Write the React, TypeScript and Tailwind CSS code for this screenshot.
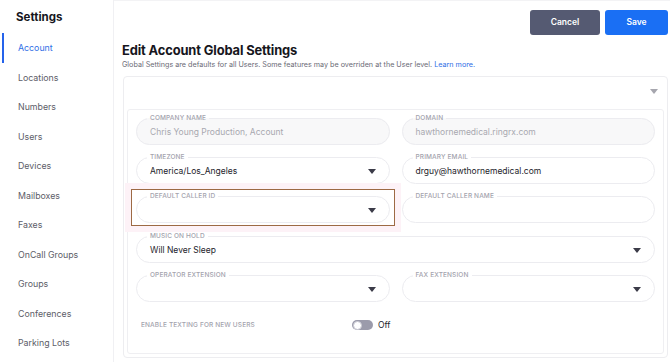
import React from "react";

const nav = [
  "Account",
  "Locations",
  "Numbers",
  "Users",
  "Devices",
  "Mailboxes",
  "Faxes",
  "OnCall Groups",
  "Groups",
  "Conferences",
  "Parking Lots",
];

function Caret({ className = "" }: { className?: string }) {
  return (
    <svg width="8" height="5" viewBox="0 0 8 5" className={className}>
      <path d="M0 0h8L4 5z" fill="currentColor" />
    </svg>
  );
}

function Field({
  label,
  value,
  disabled,
  select,
  className = "",
}: {
  label: string;
  value?: string;
  disabled?: boolean;
  select?: boolean;
  className?: string;
}) {
  return (
    <fieldset
      className={
        "rounded-full border border-[#ececf0] px-[10px] pb-[2px] " +
        (disabled ? "bg-[#f8f8f9] " : "bg-white ") +
        className
      }
    >
      <legend className="px-[3px] text-[6.5px] font-medium leading-[9px] tracking-[0.02em] text-[#a3a3ad] uppercase">
        {label}
      </legend>
      <div className="flex h-[19px] items-center justify-between pl-[3px] pr-[3px]">
        <span
          className={
            "text-[8.5px] " + (disabled ? "text-[#a8a8b0]" : "text-[#23232b]")
          }
        >
          {value}
        </span>
        {select && <Caret className="text-[#3b3b48]" />}
      </div>
    </fieldset>
  );
}

export default function App() {
  return (
    <div
      className="flex h-[362px] w-[670px] overflow-hidden bg-white"
      style={{ fontFamily: "Inter, 'Noto Sans', sans-serif" }}
    >
      {/* Sidebar */}
      <aside className="w-[114px] shrink-0 border-r border-[#f0f0f3]">
        <div className="pl-[16px] pt-[9px] text-[11.5px] font-bold text-[#16161d]">
          Settings
        </div>
        <nav className="mt-[7px]">
          {nav.map((item, i) => (
            <div
              key={item}
              className={
                "flex h-[29.5px] items-center border-l-[2px] pl-[14px] text-[8.8px] " +
                (i === 0
                  ? "ml-[2px] border-[#2563eb] text-[#2f6ee6]"
                  : "ml-[2px] border-transparent text-[#5d5d68]")
              }
            >
              {item}
            </div>
          ))}
        </nav>
      </aside>

      {/* Main */}
      <main className="flex-1 border-t border-[#f3f3f5] pl-[8px] pr-[2px]">
        <div className="flex justify-end gap-[5px] pt-[9px]">
          <button className="h-[25px] w-[70px] rounded-[3px] bg-[#555a72] text-[8.5px] font-semibold text-white">
            Cancel
          </button>
          <button className="h-[25px] w-[63px] rounded-[3px] bg-[#1a6ff4] text-[8.5px] font-semibold text-white">
            Save
          </button>
        </div>

        <h1 className="mt-[8px] text-[12.9px] leading-[16px] font-bold tracking-[-0.01em] text-[#16161d]">
          Edit Account Global Settings
        </h1>
        <p className="mt-[1px] text-[7.2px] text-[#6a6a75]">
          Global Settings are defaults for all Users. Some features may be
          overriden at the User level.{" "}
          <span className="text-[#2f6ee6]">Learn more.</span>
        </p>

        <section className="mt-[5px] ml-[1px] rounded-[4px] border border-[#ededf0] p-[3px] pt-0">
          <div className="flex h-[32px] items-center justify-end pr-[6px]">
            <Caret className="mb-[3px] text-[#a6a6ae]" />
          </div>
          <div className="rounded-[3px] border border-[#efeff2] px-[8px] pt-[4px] pb-[4px]">
            <div className="grid grid-cols-2 gap-x-[12px] gap-y-[8.3px]">
              <Field label="Company Name" value="Chris Young Production, Account" disabled />
              <Field label="Domain" value="hawthornemedical.ringrx.com" disabled />
              <Field label="Timezone" value="America/Los_Angeles" select />
              <Field label="Primary Email" value="drguy@hawthornemedical.com" />
              <div className="relative">
                <div className="absolute -top-[3px] -right-[5px] -bottom-[3px] -left-[5px] border border-[#9d6a44] shadow-[0_0_0_6px_#fdf2f7]" />
                <Field label="Default Caller ID" select className="relative" />
              </div>
              <Field label="Default Caller Name" />
              <Field label="Music On Hold" value="Will Never Sleep" select className="col-span-2" />
              <Field label="Operator Extension" select />
              <Field label="Fax Extension" select />
            </div>

            <div className="flex h-[47px] items-center pl-[5px]">
              <span className="w-[211px] text-[6.5px] font-medium tracking-[0.02em] text-[#a3a3ad] uppercase">
                Enable texting for new users
              </span>
              <span className="relative flex h-[10px] w-[21px] items-center rounded-full bg-[#9b9bab]">
                <span className="ml-[1px] h-[9px] w-[9px] rounded-full border border-[#c9c9d2] bg-white" />
              </span>
              <span className="ml-[5px] text-[8.5px] text-[#23232b]">Off</span>
            </div>
          </div>
        </section>
      </main>
    </div>
  );
}
